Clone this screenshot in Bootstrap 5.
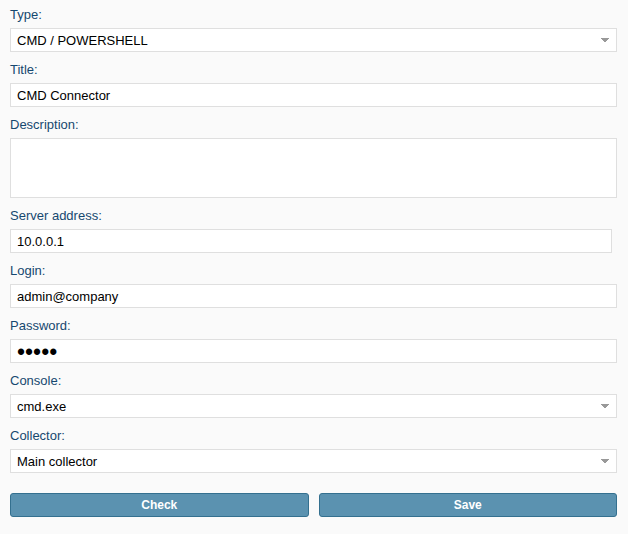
<!DOCTYPE html>
<html lang="en">
<head>
<meta charset="utf-8">
<meta name="viewport" content="width=device-width, initial-scale=1">
<title>CMD Connector</title>
<link href="https://cdn.jsdelivr.net/npm/bootstrap@5.3.0/dist/css/bootstrap.min.css" rel="stylesheet">
<style>
body { background: #fafafa; font-family: "Liberation Sans", Arial, sans-serif; font-size: 13px; line-height: 20px; }
.connector-form { padding: 5px 11px 17px 10px; }
.field { margin-bottom: 8px; }
.field .form-label { color: #16486f; margin-bottom: 3px; line-height: 20px; display: block; }
.field .form-control, .field .form-select {
  height: 24px; min-height: 24px; padding: 1px 6px 0; border: 1px solid #dfdfdf; border-radius: 0;
  background-color: #fff; color: #000; font-size: 13px; line-height: 20px;
}
.field .form-select {
  padding-right: 24px;
  background-image: url("data:image/svg+xml,%3Csvg xmlns='http://www.w3.org/2000/svg' viewBox='0 0 8 4' shape-rendering='crispEdges'%3E%3Cpath fill='%23999' d='M0 0h8v1H7v1H6v1H5v1H3V3H2V2H1V1H0z'/%3E%3C/svg%3E");
  background-size: 8px 4px; background-position: right 7px center;
}
.field textarea.form-control { height: 60px; resize: none; }
.field .form-control.secret { font-size: 23px; padding-top: 3px; }
.narrow { padding-right: 5px; }
.actions { gap: 10px; padding-top: 12px; }
.btn-action {
  --bs-btn-bg: #5b92b0; --bs-btn-color: #fff; --bs-btn-border-color: #34708f;
  --bs-btn-hover-bg: #4f86a4; --bs-btn-hover-color: #fff; --bs-btn-hover-border-color: #34708f;
  height: 24px; padding: 0; font-size: 12px; line-height: 22px; font-weight: 700; border-radius: 3px;
}
</style>
</head>
<body>
<form class="connector-form">
  <div class="field"><label class="form-label" for="type">Type:</label>
    <select class="form-select" id="type"><option>CMD / POWERSHELL</option></select></div>
  <div class="field"><label class="form-label" for="title">Title:</label>
    <input class="form-control" id="title" type="text" value="CMD Connector"></div>
  <div class="field"><label class="form-label" for="description">Description:</label>
    <textarea class="form-control" id="description"></textarea></div>
  <div class="field narrow"><label class="form-label" for="server">Server address:</label>
    <input class="form-control" id="server" type="text" value="10.0.0.1"></div>
  <div class="field"><label class="form-label" for="login">Login:</label>
    <input class="form-control" id="login" type="text" value="admin@company"></div>
  <div class="field"><label class="form-label" for="password">Password:</label>
    <input class="form-control secret" id="password" type="password" value="admin"></div>
  <div class="field"><label class="form-label" for="console">Console:</label>
    <select class="form-select" id="console"><option>cmd.exe</option></select></div>
  <div class="field"><label class="form-label" for="collector">Collector:</label>
    <select class="form-select" id="collector"><option>Main collector</option></select></div>
  <div class="actions d-flex">
    <button class="btn btn-action flex-fill w-50" type="button">Check</button>
    <button class="btn btn-action flex-fill w-50" type="button">Save</button>
  </div>
</form>
<script src="https://cdn.jsdelivr.net/npm/bootstrap@5.3.0/dist/js/bootstrap.bundle.min.js"></script>
</body>
</html>
